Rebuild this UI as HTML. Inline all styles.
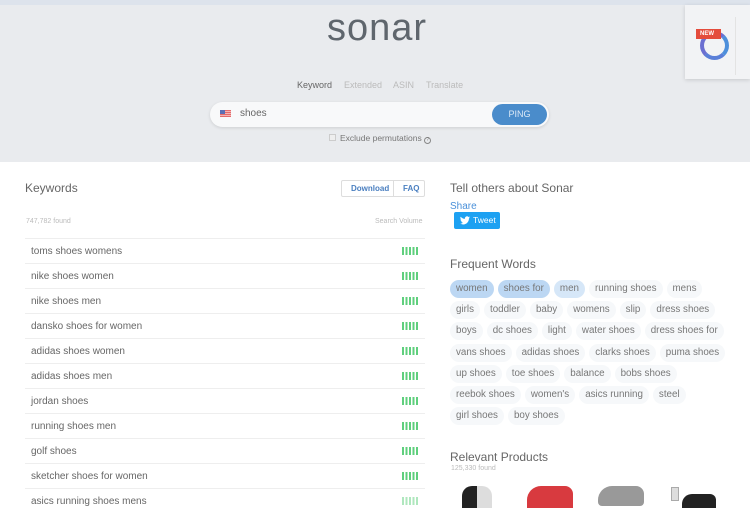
<!DOCTYPE html>
<html><head><meta charset="utf-8"><style>
*{box-sizing:border-box;margin:0;padding:0}
body{width:750px;height:508px;overflow:hidden;background:#fff;font-family:"Liberation Sans",sans-serif;position:relative;color:#555}
.hdr{position:absolute;left:0;top:0;width:750px;height:162px;background:#e9ebee;border-top:5px solid #dde3ec}
.logo{position:absolute;left:327px;top:7px;font-size:38px;color:#5f666d;letter-spacing:1px}
.tabs{position:absolute;top:80px;font-size:9px;color:#bbb}
.search{position:absolute;left:210px;top:102px;width:339px;height:25px;background:#f8f9fa;border-radius:13px;box-shadow:0 1px 3px rgba(0,0,0,.12)}
.ping{position:absolute;left:492px;top:104px;width:55px;height:21px;background:#4a8ccb;border-radius:11px;color:#dce9f6;font-size:9px;text-align:center;line-height:21px}
.new{position:absolute;left:685px;top:5px;width:65px;height:74px;background:#f2f3f5;box-shadow:0 1px 4px rgba(0,0,0,.15)}
.kw{position:absolute;left:25px;width:400px;height:25px;border-top:1px solid #eee;font-size:10px;color:#666;line-height:25px;padding-left:6px}
.bars{position:absolute;right:6px;top:8px;height:8px;width:17px;background:repeating-linear-gradient(90deg,#5fcf7d 0 2px,transparent 2px 3.5px)}
.h{position:absolute;font-size:12px;color:#666}
.row{position:absolute;left:450px;display:flex;gap:4px}
.row span{font-size:9.8px;color:#777;padding:0 6px;height:18px;line-height:18px;border-radius:9px;background:#f6f8fa}
.row span.b{background:#bcd7f3}
.row span.c{background:#d6e7f8}
</style></head><body>
<div class="hdr"></div>
<div class="logo">sonar</div>
<div class="tabs" style="left:297px;color:#666">Keyword</div>
<div class="tabs" style="left:344px">Extended</div>
<div class="tabs" style="left:393px">ASIN</div>
<div class="tabs" style="left:426px">Translate</div>
<div class="search"></div>
<div style="position:absolute;left:220px;top:110px;width:11px;height:7px;background:repeating-linear-gradient(#e46a6a 0 1px,#f3b5b5 1px 2px)"><div style="width:5px;height:4px;background:#5b6fb5"></div></div>
<div style="position:absolute;left:240px;top:108px;font-size:10px;color:#666">shoes</div>
<div class="ping">PING</div>
<div style="position:absolute;left:329px;top:134px;width:7px;height:7px;border:1px solid #ccc;background:#eee"></div>
<div style="position:absolute;left:340px;top:133px;font-size:8.5px;color:#777">Exclude permutations <span style="display:inline-block;width:7px;height:7px;border:1px solid #888;border-radius:50%;font-size:5px;line-height:5px;text-align:center">?</span></div>
<div class="new">
<div style="position:absolute;left:15px;top:26px;width:29px;height:29px;border:4px solid #6b6fd1;border-radius:50%;border-right-color:#4d8fdb;border-bottom-color:#5a7fd8"></div>
<div style="position:absolute;left:11px;top:24px;width:25px;height:10px;background:#e44c3c;color:#fff;font-size:6px;font-weight:bold;line-height:10px;padding-left:4px">NEW</div>
<div style="position:absolute;left:50px;top:12px;width:1px;height:58px;background:#e3e3e3"></div>
</div>

<div class="h" style="left:25px;top:181px">Keywords</div>
<div style="position:absolute;left:341px;top:180px;width:84px;height:17px;border:1px solid #ddd;border-radius:2px;font-size:8px;color:#4a7fc0;font-weight:bold;line-height:15px">
<span style="position:absolute;left:9px">Download</span><span style="position:absolute;left:51px;top:-1px;height:17px;border-left:1px solid #ddd"></span><span style="position:absolute;left:61px">FAQ</span></div>
<div style="position:absolute;left:26px;top:218px;font-size:7px;color:#bbb">747,782 found</div>
<div style="position:absolute;left:375px;top:218px;font-size:7px;color:#bbb">Search Volume</div>

<div class="kw" style="top:238px">toms shoes womens<div class="bars"></div></div>
<div class="kw" style="top:263px">nike shoes women<div class="bars"></div></div>
<div class="kw" style="top:288px">nike shoes men<div class="bars"></div></div>
<div class="kw" style="top:313px">dansko shoes for women<div class="bars"></div></div>
<div class="kw" style="top:338px">adidas shoes women<div class="bars"></div></div>
<div class="kw" style="top:363px">adidas shoes men<div class="bars"></div></div>
<div class="kw" style="top:388px">jordan shoes<div class="bars"></div></div>
<div class="kw" style="top:413px">running shoes men<div class="bars"></div></div>
<div class="kw" style="top:438px">golf shoes<div class="bars"></div></div>
<div class="kw" style="top:463px">sketcher shoes for women<div class="bars"></div></div>
<div class="kw" style="top:488px">asics running shoes mens<div class="bars" style="opacity:.5"></div></div>

<div class="h" style="left:450px;top:181px">Tell others about Sonar</div>
<div style="position:absolute;left:450px;top:201px;font-size:10px;color:#4a90d9">Share</div>
<div style="position:absolute;left:454px;top:212px;width:46px;height:17px;background:#1da1f2;border-radius:2px;color:#fff;font-size:8.5px;line-height:17px;padding-left:19px">Tweet<svg style="position:absolute;left:6px;top:4px" width="10" height="9" viewBox="0 0 24 20"><path fill="#fff" d="M24 2.4a9.8 9.8 0 0 1-2.8.8A4.9 4.9 0 0 0 23.3.4a9.9 9.9 0 0 1-3.1 1.2A4.9 4.9 0 0 0 11.8 6 14 14 0 0 1 1.7.9a4.9 4.9 0 0 0 1.5 6.6A4.9 4.9 0 0 1 1 6.9a4.9 4.9 0 0 0 3.9 4.9 4.9 4.9 0 0 1-2.2.1 4.9 4.9 0 0 0 4.6 3.4A9.9 9.9 0 0 1 0 17.300 14 14 0 0 0 7.5 19.5c9.1 0 14-7.5 14-14v-.6A10 10 0 0 0 24 2.4z"/></svg></div>

<div class="h" style="left:450px;top:257px">Frequent Words</div>
<div class="row" style="top:280px"><span class="b">women</span><span class="b">shoes for</span><span class="c">men</span><span>running shoes</span><span>mens</span></div>
<div class="row" style="top:301px"><span>girls</span><span>toddler</span><span>baby</span><span>womens</span><span>slip</span><span>dress shoes</span></div>
<div class="row" style="top:322px"><span>boys</span><span>dc shoes</span><span>light</span><span>water shoes</span><span>dress shoes for</span></div>
<div class="row" style="top:344px"><span>vans shoes</span><span>adidas shoes</span><span>clarks shoes</span><span>puma shoes</span></div>
<div class="row" style="top:365px"><span>up shoes</span><span>toe shoes</span><span>balance</span><span>bobs shoes</span></div>
<div class="row" style="top:386px"><span>reebok shoes</span><span>women's</span><span>asics running</span><span>steel</span></div>
<div class="row" style="top:407px"><span>girl shoes</span><span>boy shoes</span></div>

<div class="h" style="left:450px;top:450px">Relevant Products</div>
<div style="position:absolute;left:451px;top:465px;font-size:7px;color:#bbb">125,330 found</div>
<div style="position:absolute;left:462px;top:486px;width:30px;height:22px;background:linear-gradient(90deg,#222 50%,#ddd 50%);border-radius:10px 10px 0 0"></div>
<div style="position:absolute;left:527px;top:486px;width:46px;height:22px;background:#d83a3f;border-radius:14px 8px 0 0"></div>
<div style="position:absolute;left:598px;top:486px;width:46px;height:20px;background:#999;border-radius:14px 8px 4px 4px"></div>
<div style="position:absolute;left:671px;top:487px;width:8px;height:14px;background:#ddd;border:1px solid #aaa"></div>
<div style="position:absolute;left:682px;top:494px;width:34px;height:14px;background:#222;border-radius:10px 6px 0 0"></div>
</body></html>
